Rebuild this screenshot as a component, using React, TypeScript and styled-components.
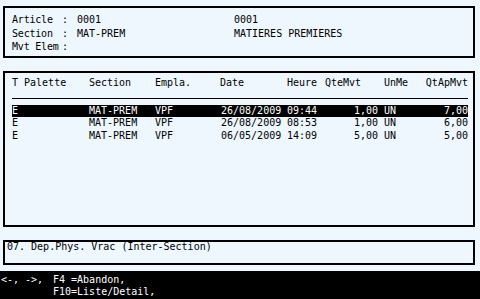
import React from 'react';
import styled, { createGlobalStyle } from 'styled-components';

const GlobalStyle = createGlobalStyle`
  * { box-sizing: border-box; }
  html, body {
    margin: 0;
    padding: 0;
    background: #eef6fe;
  }
  body {
    font-family: "DejaVu Sans Mono", "Liberation Mono", monospace;
    font-size: 10px;
    color: #000;
  }
`;

const Screen = styled.div`
  width: 480px;
  height: 299px;
  display: flex;
  flex-direction: column;
  background: #eef6fe;
  overflow: hidden;
`;

const Content = styled.div`
  display: flex;
  flex-direction: column;
  gap: 13px;
  padding: 6px 5px 0 3px;
`;

const Panel = styled.div<{ $height: number }>`
  height: ${(p) => p.$height}px;
  border: 2px solid #000;
`;

const InfoGrid = styled.div`
  display: grid;
  grid-template-columns: 50px 15px 157px 1fr;
  line-height: 13.5px;
  padding: 5px 7px 0;
  white-space: pre;
`;

const Label = styled.span`
  letter-spacing: -0.2px;
`;

const TableBox = styled.div`
  padding: 4px 5px 0 7px;
`;

const COLS = '77px 66px 65px 67px 38px 53px 6px 41px 43px';

const HeadRow = styled.div`
  display: grid;
  grid-template-columns: ${COLS};
  line-height: 12.5px;
  padding-bottom: 8px;
  border-bottom: 1px solid #000;
  margin-bottom: 6px;
  white-space: pre;
`;

const Row = styled.div<{ $selected?: boolean }>`
  display: grid;
  grid-template-columns: ${COLS};
  line-height: 12.5px;
  white-space: pre;
  background: ${(p) => (p.$selected ? '#000' : 'transparent')};
  color: ${(p) => (p.$selected ? '#fff' : '#000')};
`;

const Cell = styled.span<{ $right?: boolean; $shift?: number }>`
  text-align: ${(p) => (p.$right ? 'right' : 'left')};
  padding-left: ${(p) => p.$shift ?? 0}px;
`;

const Message = styled.div`
  line-height: 10px;
  padding-left: 2px;
  white-space: pre;
`;

const KeyBar = styled.div`
  margin-top: 6px;
  flex: 1;
  background: #000;
  color: #fff;
  display: grid;
  grid-template-columns: 52px 1fr;
  line-height: 10px;
  padding: 4px 0 0 1px;
  white-space: pre;
`;

const rows = [
  { t: 'E', section: 'MAT-PREM', empl: 'VPF', date: '26/08/2009', heure: '09:44', qte: '1,00', un: 'UN', ap: '7,00' },
  { t: 'E', section: 'MAT-PREM', empl: 'VPF', date: '26/08/2009', heure: '08:53', qte: '1,00', un: 'UN', ap: '6,00' },
  { t: 'E', section: 'MAT-PREM', empl: 'VPF', date: '06/05/2009', heure: '14:09', qte: '5,00', un: 'UN', ap: '5,00' },
];

export default function App() {
  return (
    <Screen>
      <GlobalStyle />
      <Content>
        <Panel $height={52}>
          <InfoGrid>
            <Label>Article</Label><span>:</span><span>0001</span><span>0001</span>
            <Label>Section</Label><span>:</span><span>MAT-PREM</span><span>MATIERES PREMIERES</span>
            <Label>Mvt Elem</Label><span>:</span><span></span><span></span>
          </InfoGrid>
        </Panel>
        <Panel $height={156}>
          <TableBox>
            <HeadRow>
              <Cell>T Palette</Cell>
              <Cell>Section</Cell>
              <Cell>Empla.</Cell>
              <Cell>Date</Cell>
              <Cell>Heure</Cell>
              <Cell>QteMvt</Cell>
              <Cell></Cell>
              <Cell>UnMe</Cell>
              <Cell $right>QtApMvt</Cell>
            </HeadRow>
            {rows.map((r, i) => (
              <Row key={i} $selected={i === 0}>
                <Cell>{r.t}</Cell>
                <Cell>{r.section}</Cell>
                <Cell>{r.empl}</Cell>
                <Cell $shift={1}>{r.date}</Cell>
                <Cell>{r.heure}</Cell>
                <Cell $right>{r.qte}</Cell>
                <Cell></Cell>
                <Cell>{r.un}</Cell>
                <Cell $right>{r.ap}</Cell>
              </Row>
            ))}
          </TableBox>
        </Panel>
        <Panel $height={25}>
          <Message>07. Dep.Phys. Vrac (Inter-Section)</Message>
        </Panel>
      </Content>
      <KeyBar>
        <span>{'<-, ->,'}</span><span>F4 =Abandon,</span>
        <span></span><span>F10=Liste/Detail,</span>
      </KeyBar>
    </Screen>
  );
}
